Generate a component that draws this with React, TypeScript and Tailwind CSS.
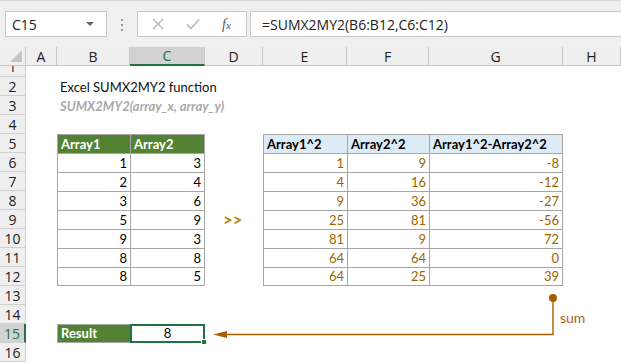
import React from "react";

const CELL_FONT = { fontFamily: "Lato, 'Liberation Sans', sans-serif" };
const UI_FONT = { fontFamily: "'Open Sans', 'Noto Sans', sans-serif" };

const COLS = ["A", "B", "C", "D", "E", "F", "G", "H"];

const left = [
  [1, 3],
  [2, 4],
  [3, 6],
  [5, 9],
  [9, 3],
  [8, 8],
  [8, 5],
];

const right = [
  [1, 9, -8],
  [4, 16, -12],
  [9, 36, -27],
  [25, 81, -56],
  [81, 9, 72],
  [64, 64, 0],
  [64, 25, 39],
];

function FormulaBar() {
  return (
    <div className="relative h-[47px] border-t border-[#d6d6d6] bg-[#f0f0f0]" style={UI_FONT}>
      <div className="absolute left-[5px] top-[10px] flex h-[26px] w-[102px] items-center justify-between border border-[#c6c6c6] bg-white pl-[6px] pr-[12px] text-[14px] text-[#222]">
        <span>C15</span>
        <span className="h-0 w-0 border-x-[4px] border-t-[4px] border-x-transparent border-t-[#666]" />
      </div>
      <div className="absolute left-[121px] top-[18px] flex flex-col gap-[3px]">
        <span className="h-[2px] w-[2px] bg-[#9a9a9a]" />
        <span className="h-[2px] w-[2px] bg-[#9a9a9a]" />
        <span className="h-[2px] w-[2px] bg-[#9a9a9a]" />
      </div>
      <div className="absolute left-[137px] top-[10px] flex h-[26px] w-[110px] items-center border border-[#c6c6c6] bg-white">
        <svg className="absolute left-[14px] top-[6px]" width="12" height="12" viewBox="0 0 12 12">
          <path d="M1 1L11 11M11 1L1 11" stroke="#b4b4b4" strokeWidth="1.4" fill="none" />
        </svg>
        <svg className="absolute left-[48px] top-[6px]" width="14" height="12" viewBox="0 0 14 12">
          <path d="M1 6.5L5 10.5L13 1.5" stroke="#b4b4b4" strokeWidth="1.5" fill="none" />
        </svg>
        <span className="absolute left-[84px] top-[2px] text-[14px] italic text-[#555]" style={{ fontFamily: "'Liberation Serif', serif" }}>
          f<span className="text-[11px]">x</span>
        </span>
      </div>
      <div className="absolute left-[250px] right-0 top-[10px] flex h-[26px] items-center border border-r-0 border-[#c6c6c6] bg-white pl-[11px] text-[14px] text-[#222]">
        =SUMX2MY2(B6:B12,C6:C12)
      </div>
    </div>
  );
}

function Cell({ className = "", children }: { className?: string; children?: React.ReactNode }) {
  return <div className={`flex items-end overflow-visible whitespace-nowrap px-[3px] pb-[1px] text-[13px] leading-[16px] ${className}`}>{children}</div>;
}

function RowHead({ n, active, clip }: { n: number; active?: boolean; clip?: boolean }) {
  return (
    <div
      className={`flex justify-center overflow-hidden border-b border-r border-[#d0d0d0] text-[14px] ${clip ? "items-end leading-[19px]" : "items-center"} ${
        active ? "border-r-2 border-r-[#217346] bg-[#d2d2d2] text-[#217346]" : "bg-[#efefef] text-[#222]"
      }`}
      style={UI_FONT}
    >
      {n}
    </div>
  );
}

function Empty({ n = 1 }: { n?: number }) {
  return (
    <>
      {Array.from({ length: n }).map((_, i) => (
        <div key={i} />
      ))}
    </>
  );
}

export default function App() {
  const tb = "border-l border-t border-[#a6a6a6]";
  return (
    <div className="relative h-[363px] w-[621px] overflow-hidden bg-white">
      <FormulaBar />
      <div className="grid grid-cols-[26px_31px_73px_75px_58px_84px_82px_134px_58px] grid-rows-[19px_11px_repeat(16,19px)]" style={CELL_FONT}>
        {/* column headers */}
        <div className="relative border-b border-r border-[#c8c8c8] bg-[#efefef]">
          <span className="absolute bottom-[3px] right-[3px] h-0 w-0 border-b-[12px] border-l-[12px] border-b-[#c4c4c4] border-l-transparent" />
        </div>
        {COLS.map((c) => (
          <div
            key={c}
            className={`flex items-center justify-center border-r text-[14px] ${
              c === "C"
                ? "border-b-2 border-r-[#c8c8c8] border-b-[#217346] bg-[#d2d2d2] text-[#217346]"
                : "border-b border-[#c8c8c8] bg-[#efefef] text-[#222]"
            }`}
            style={UI_FONT}
          >
            {c}
          </div>
        ))}

        {/* row 1 */}
        <RowHead n={1} clip />
        <Empty n={8} />

        {/* row 2 */}
        <RowHead n={2} />
        <Empty />
        <Cell className="text-[#111]">Excel SUMX2MY2 function</Cell>
        <Empty n={6} />

        {/* row 3 */}
        <RowHead n={3} />
        <Empty />
        <Cell className="text-[12.5px] font-bold italic text-[#a9a9a9]">SUMX2MY2(array_x, array_y)</Cell>
        <Empty n={6} />

        {/* row 4 */}
        <RowHead n={4} />
        <Empty n={8} />

        {/* row 5 headers */}
        <RowHead n={5} />
        <Empty />
        <Cell className={`${tb} bg-[#548235] font-bold text-white`}>Array1</Cell>
        <Cell className={`${tb} border-r bg-[#548235] font-bold text-white`}>Array2</Cell>
        <Empty />
        <Cell className={`${tb} bg-[#ddebf7] font-bold text-black`}>Array1^2</Cell>
        <Cell className={`${tb} bg-[#ddebf7] font-bold text-black`}>Array2^2</Cell>
        <Cell className={`${tb} border-r bg-[#ddebf7] font-bold text-black`}>Array1^2-Array2^2</Cell>
        <Empty />

        {/* rows 6-12 */}
        {left.map(([a, b], i) => {
          const last = i === left.length - 1 ? "border-b" : "";
          const [x, y, z] = right[i];
          return (
            <React.Fragment key={i}>
              <RowHead n={6 + i} />
              <Empty />
              <Cell className={`${tb} ${last} justify-end text-black`}>{a}</Cell>
              <Cell className={`${tb} ${last} border-r justify-end text-black`}>{b}</Cell>
              {i === 3 ? (
                <Cell className="items-center pl-[18px] text-[17px] font-bold text-[#bf7f0c]">&gt;&gt;</Cell>
              ) : (
                <Empty />
              )}
              <Cell className={`${tb} ${last} justify-end text-[#9c6500]`}>{x}</Cell>
              <Cell className={`${tb} ${last} justify-end text-[#9c6500]`}>{y}</Cell>
              <Cell className={`${tb} ${last} border-r justify-end text-[#9c6500]`}>{z}</Cell>
              <Empty />
            </React.Fragment>
          );
        })}

        {/* rows 13-14 */}
        <RowHead n={13} />
        <Empty n={8} />
        <RowHead n={14} />
        <Empty n={8} />

        {/* row 15 */}
        <RowHead n={15} active />
        <Empty />
        <Cell className="border border-r-0 border-[#a6a6a6] bg-[#548235] font-bold text-white">Result</Cell>
        <div className="relative flex items-center justify-center border-2 border-[#217346] text-[13px] text-black">
          8
          <span className="absolute -bottom-[4px] -right-[4px] h-[6px] w-[6px] border border-white bg-[#217346]" />
        </div>
        <Empty n={5} />

        {/* row 16 */}
        <RowHead n={16} />
        <Empty n={8} />
      </div>

      {/* annotation arrow */}
      <svg className="pointer-events-none absolute left-0 top-0" width="621" height="363">
        <circle cx="553" cy="298" r="4" fill="#a65e00" />
        <path d="M553 298V334.5H224" stroke="#a65e00" strokeWidth="1.4" fill="none" />
        <path d="M213 334.5L227 331V338Z" fill="#a65e00" />
      </svg>
      <span className="absolute left-[560px] top-[307px] text-[14px] text-[#a8641a]" style={CELL_FONT}>
        sum
      </span>
    </div>
  );
}
